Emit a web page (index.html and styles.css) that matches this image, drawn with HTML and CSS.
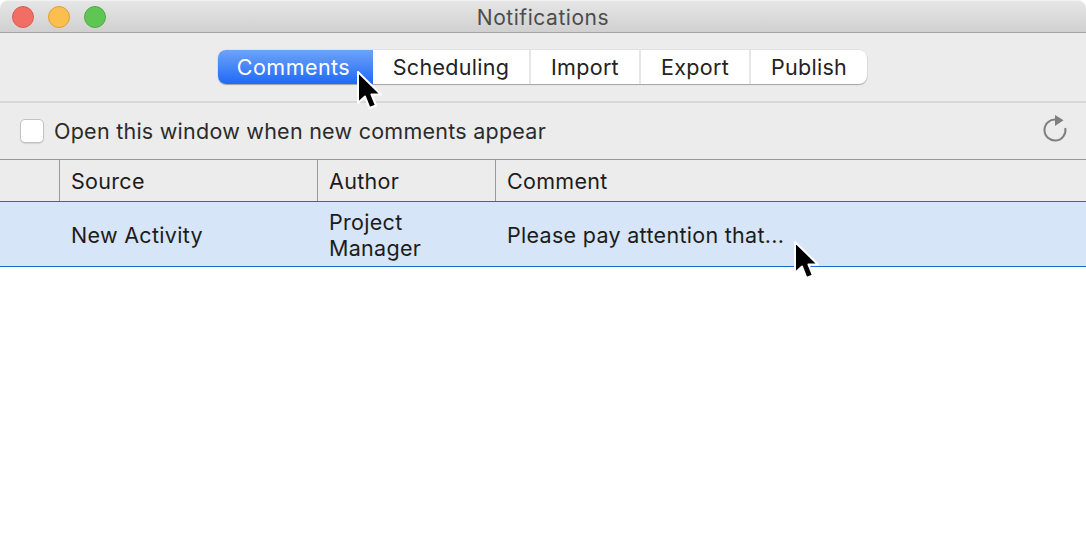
FILE: index.html
```html
<!DOCTYPE html>
<html lang="en">
<head>
<meta charset="utf-8">
<title>Notifications</title>
<link rel="stylesheet" href="styles.css">
</head>
<body>
<div class="window">
  <header class="titlebar">
    <div class="lights">
      <span class="light red"></span>
      <span class="light yellow"></span>
      <span class="light green"></span>
    </div>
    <div class="title">Notifications</div>
  </header>
  <nav class="toolbar">
    <div class="segments">
      <div class="seg seg-comments active">Comments</div>
      <div class="seg seg-scheduling">Scheduling</div>
      <div class="seg seg-import">Import</div>
      <div class="seg seg-export">Export</div>
      <div class="seg seg-publish">Publish</div>
    </div>
  </nav>
  <div class="options">
    <label class="option"><span class="checkbox"></span><span>Open this window when new comments appear</span></label>
    <svg class="refresh" width="26" height="32" viewBox="0 0 26 32" aria-hidden="true">
      <path d="M14 4.55A10.5 10.5 0 1 0 23.3 13" fill="none" stroke="#7f7f7f" stroke-width="2"/>
      <path d="M13 0L21.5 5.3L13 11Z" fill="#7f7f7f"/>
    </svg>
  </div>
  <div class="table">
    <div class="row head">
      <div class="cell c0"></div>
      <div class="cell c1">Source</div>
      <div class="cell c2">Author</div>
      <div class="cell c3">Comment</div>
    </div>
    <div class="row selected">
      <div class="cell c0"></div>
      <div class="cell c1">New Activity</div>
      <div class="cell c2">Project<br>Manager</div>
      <div class="cell c3">Please pay attention that...</div>
    </div>
  </div>
  <svg class="cursor cursor-a" width="28" height="40" viewBox="0 0 28 40" aria-hidden="true">
    <path d="M2 1V32L9 25.5L13.5 37L20 34.5L15.5 23.5H25Z" fill="#000" stroke="#fff" stroke-width="2" stroke-linejoin="round"/>
  </svg>
  <svg class="cursor cursor-b" width="28" height="40" viewBox="0 0 28 40" aria-hidden="true">
    <path d="M2 1V32L9 25.5L13.5 37L20 34.5L15.5 23.5H25Z" fill="#000" stroke="#fff" stroke-width="2" stroke-linejoin="round"/>
  </svg>
</div>
</body>
</html>
```
FILE: styles.css
```css
* { box-sizing: border-box; }
html, body { margin: 0; height: 100%; background: #fff; }
body { overflow: hidden; }
.window {
  position: relative;
  width: 1086px;
  height: 533px;
  overflow: hidden;
  font-family: Inter, "Liberation Sans", sans-serif;
  font-size: 21.5px;
  letter-spacing: .3px;
  color: #222;
  background: #fff;
}
.titlebar {
  position: relative;
  height: 33px;
  display: flex;
  align-items: center;
  justify-content: center;
  padding-top: 2px;
  background: linear-gradient(#e6e6e6, #d0d0d0);
  border-bottom: 1px solid #a4a4a4;
  border-top: 1px solid #f2f2f2;
  border-radius: 8px 8px 0 0;
}
.lights {
  position: absolute;
  left: 12px;
  top: 5px;
  display: flex;
  gap: 14px;
}
.light { width: 22px; height: 22px; border-radius: 50%; border: 1px solid; }
.red { background: #f26d63; border-color: #d95c52; }
.yellow { background: #fabf4e; border-color: #dea035; }
.green { background: #5fc653; border-color: #4cab40; }
.title { color: #4c4c4c; font-size: 21px; letter-spacing: .55px; line-height: 1; }
.toolbar {
  height: 70px;
  padding: 17px 0 0 218px;
  background: #ececec;
  border-bottom: 2px solid #d8d8d8;
}
.segments {
  display: flex;
  width: 649px;
  height: 34px;
  background: #fff;
  border-radius: 8px;
  box-shadow: 0 1px 1px rgba(0,0,0,.28), 0 0 0 .5px rgba(0,0,0,.08);
}
.seg {
  display: flex;
  align-items: center;
  justify-content: center;
  border-left: 2px solid #e6e6e6;
}
.seg-comments { width: 155px; border-left: 0; }
.seg-scheduling { width: 156px; border-left: 0; }
.seg-import { width: 110px; }
.seg-export { width: 110px; }
.seg-publish { flex: 1; }
.active {
  color: #fff;
  letter-spacing: .45px;
  background: linear-gradient(#6ea3f8, #1f69f6);
  border-radius: 8px 0 0 8px;
  padding-right: 4px;
}
.options {
  height: 57px;
  padding: 0 18px 0 20px;
  display: flex;
  align-items: center;
  justify-content: space-between;
  background: #ececec;
  border-bottom: 1px solid #989898;
}
.option { display: flex; align-items: center; gap: 10px; color: #2b2b2b; letter-spacing: .25px; }
.checkbox {
  width: 24px;
  height: 24px;
  background: #fff;
  border: 1px solid #c2c2c2;
  border-radius: 5px;
  box-shadow: 0 1px 1px rgba(0,0,0,.1);
}
.refresh { display: block; }
.row { display: flex; }
.cell { display: flex; align-items: center; padding-left: 11px; line-height: 26px; }
.c0 { width: 59px; padding: 0; }
.c1 { width: 258px; }
.c2 { width: 178px; }
.c3 { flex: 1; }
.head {
  height: 42px;
  background: #ececec;
  border-bottom: 1px solid #1f69d8;
  color: #1c1c1c;
}
.head .cell { border-right: 1px solid #9a9a9a; }
.head .c0 { width: 60px; }
.head .c3 { border-right: 0; }
.selected {
  height: 65px;
  background: #d6e5f7;
  border-bottom: 1px solid #1f69d8;
  color: #1c1c1c;
}
.selected .c0 { width: 60px; }
.selected .cell { padding-top: 2px; }
.cursor { position: absolute; }
.cursor-a { left: 356px; top: 71px; }
.cursor-b { left: 793px; top: 241px; }
```
